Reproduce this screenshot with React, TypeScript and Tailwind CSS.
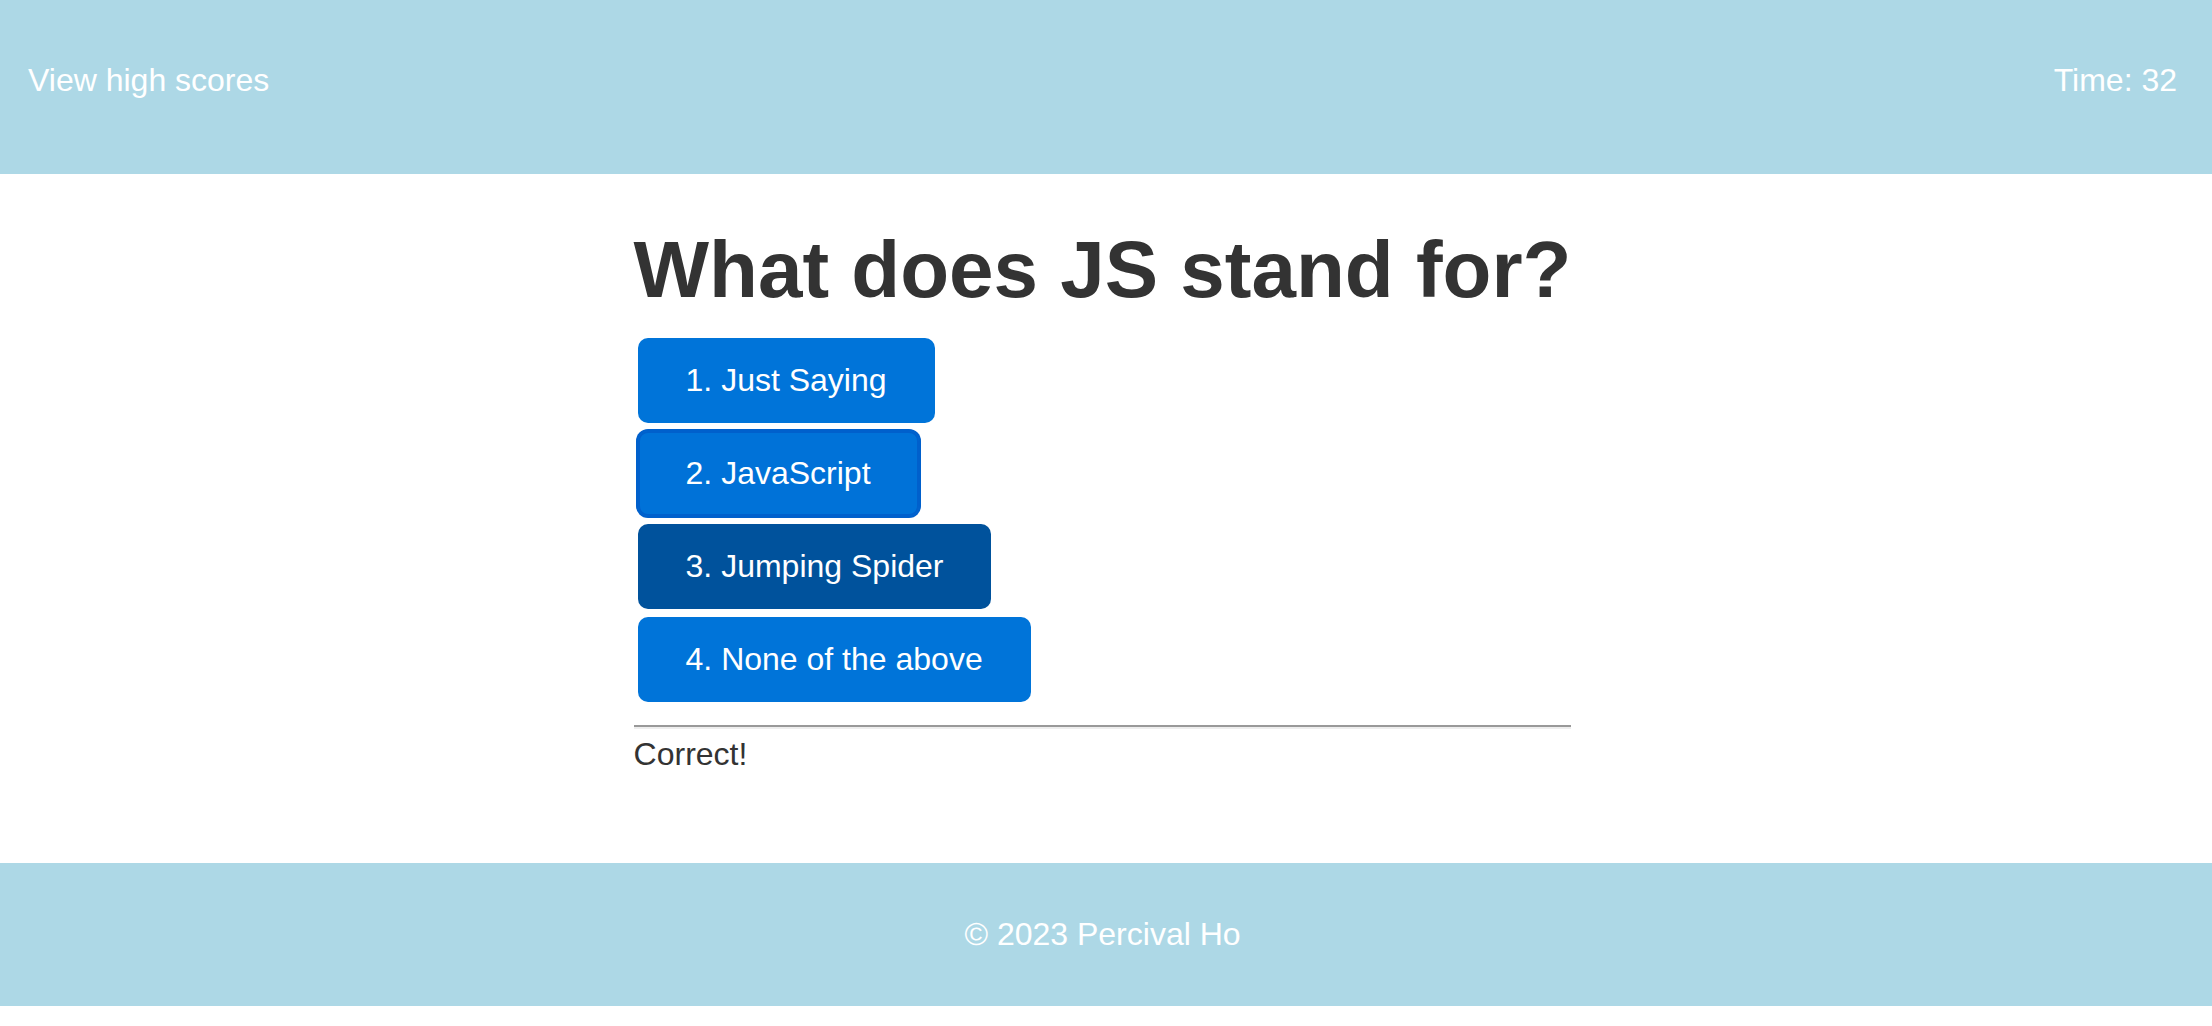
import React from "react";

const answers = [
  { label: "1. Just Saying", state: "idle" },
  { label: "2. JavaScript", state: "focus" },
  { label: "3. Jumping Spider", state: "hover" },
  { label: "4. None of the above", state: "idle" },
];

export default function App() {
  return (
    <div className="min-h-[1026px] bg-white font-['Liberation_Sans',Arial,sans-serif]">
      {/* Cabecera */}
      <header className="flex h-[174px] justify-between bg-[#add8e6] pl-[28px] pr-[35px] pt-[62px] text-[32px] leading-[37px] text-white">
        <a href="#" className="h-fit">View high scores</a>
        <p className="h-fit">Time: 32</p>
      </header>

      {/* Pregunta */}
      <main className="flex h-[689px] justify-center pr-[7px] pt-[51px]">
        <div className="w-fit">
          <h1 className="text-[80px] font-bold leading-[89px] text-[#333333]">
            What does JS stand for?
          </h1>
          <div className="ml-[4px] mt-[24px] flex flex-col items-start gap-[8px]">
            {answers.map((a) => (
              <button
                key={a.label}
                className={`rounded-[10px] px-[48px] py-[24px] text-[32px] leading-[37px] text-white ${
                  a.state === "hover"
                    ? "bg-[#00529c]"
                    : a.state === "focus"
                    ? "bg-[#0072d8] shadow-[0_0_0_2px_#0060cc,inset_0_0_0_2px_#0060cc]"
                    : "bg-[#0074d9]"
                }`}
              >
                {a.label}
              </button>
            ))}
          </div>
          <hr className="mt-[23px] border-t-2 border-b-2 border-t-[#999999] border-b-[#eeeeee]" />
          <p className="mt-[7px] text-[32px] leading-[37px] text-[#333333]">Correct!</p>
        </div>
      </main>

      {/* Pie */}
      <footer className="flex h-[143px] items-center justify-center bg-[#add8e6] pr-[7px] text-[32px] leading-[37px] text-white">
        © 2023 Percival Ho
      </footer>
    </div>
  );
}
